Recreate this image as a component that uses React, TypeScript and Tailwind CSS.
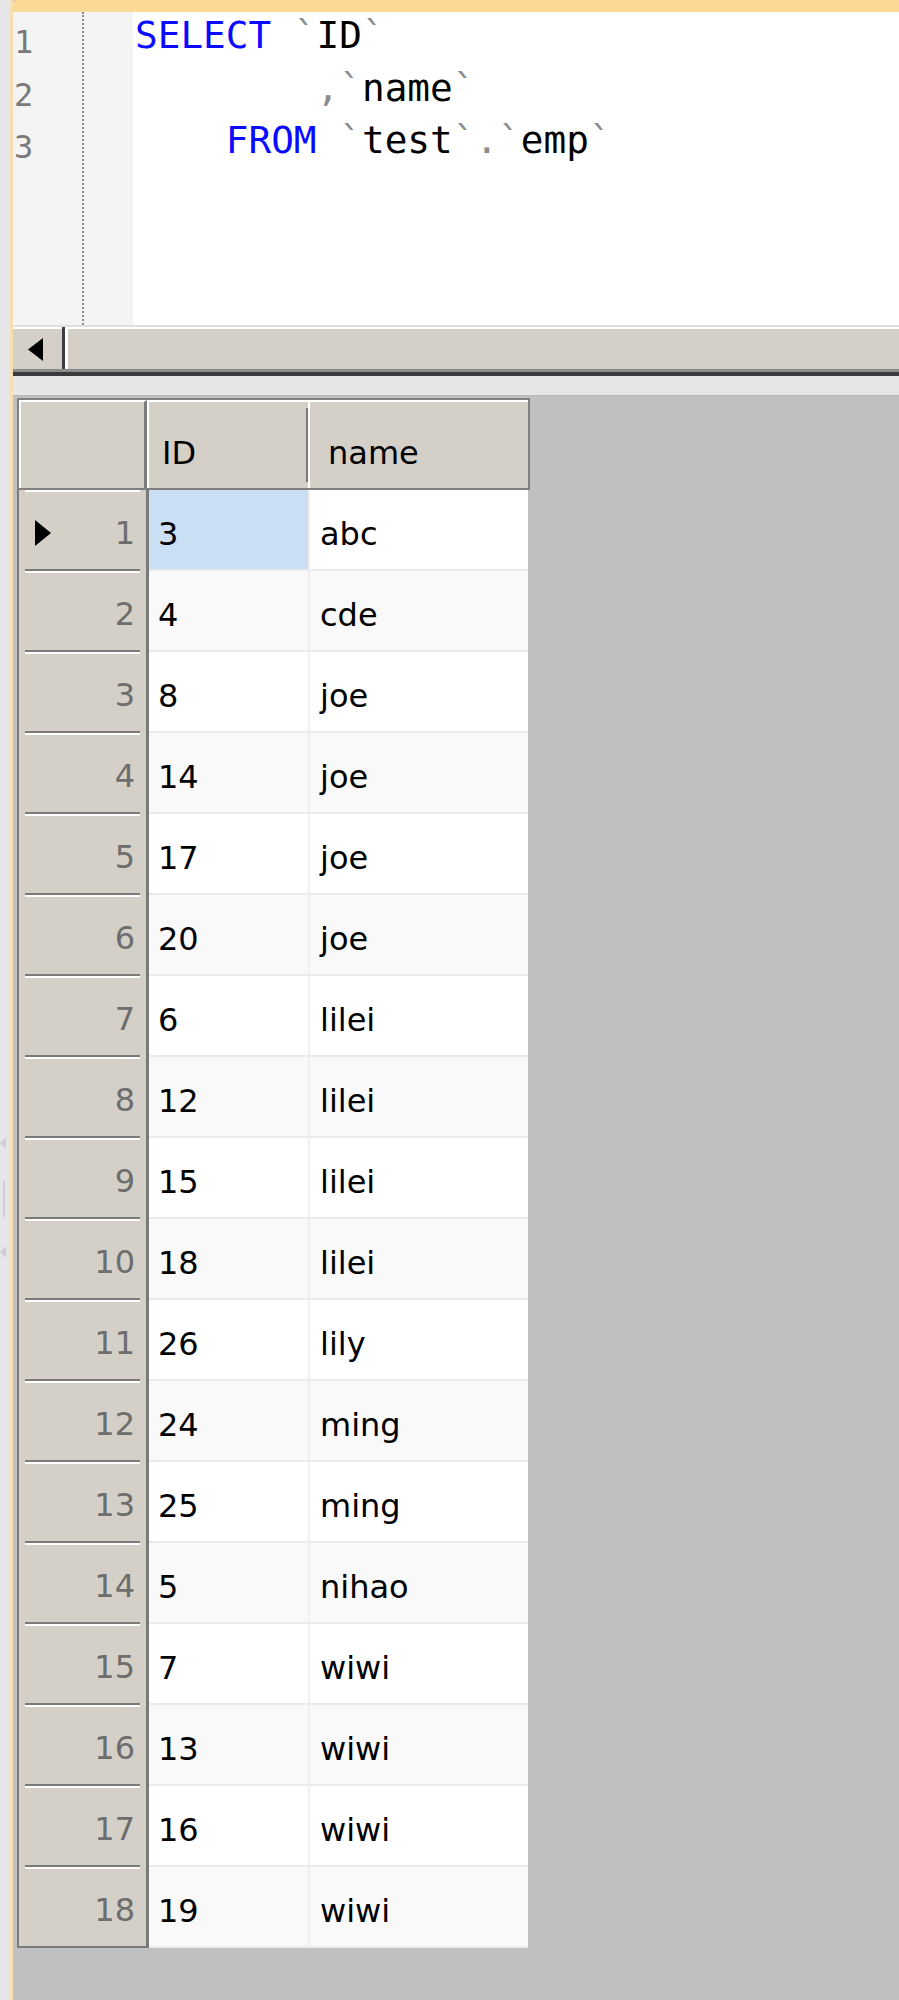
import React from "react";

const rows: [number, string][] = [
  [3, "abc"],
  [4, "cde"],
  [8, "joe"],
  [14, "joe"],
  [17, "joe"],
  [20, "joe"],
  [6, "lilei"],
  [12, "lilei"],
  [15, "lilei"],
  [18, "lilei"],
  [26, "lily"],
  [24, "ming"],
  [25, "ming"],
  [5, "nihao"],
  [7, "wiwi"],
  [13, "wiwi"],
  [16, "wiwi"],
  [19, "wiwi"],
];

const Kw = ({ children }: { children: React.ReactNode }) => (
  <span className="text-[#0a0aff]">{children}</span>
);

const Tick = () => <span className="text-[#8c8c8c]">`</span>;

const Dim = ({ children }: { children: React.ReactNode }) => (
  <span className="text-[#8c8c8c]">{children}</span>
);

const Editor: React.FC = () => (
  <div className="h-[313px] flex bg-white">
    {/* gutter */}
    <div className="w-[120px] flex bg-[#f4f4f4] shrink-0">
      <div className="w-[69px] pt-[4px] pl-[1px] font-['DejaVu_Sans_Mono',monospace] text-[32px] leading-[52.5px] text-[#7a7a7a]">
        <div>1</div>
        <div>2</div>
        <div>3</div>
      </div>
      <div className="w-0 border-l-2 border-dotted border-[#8a8a8a]" />
    </div>
    {/* code */}
    <div className="flex-1 pl-[2px] -mt-[3px] font-['DejaVu_Sans_Mono',monospace] text-[37.7px] leading-[52.5px] text-black whitespace-pre">
      <div>
        <Kw>SELECT</Kw> <Tick />ID<Tick />
      </div>
      <div>
        {"        "}
        <Dim>,</Dim>
        <Tick />name<Tick />
      </div>
      <div>
        {"    "}
        <Kw>FROM</Kw> <Tick />test<Tick />
        <Dim>.</Dim>
        <Tick />emp<Tick />
      </div>
    </div>
  </div>
);

const ScrollBar: React.FC = () => (
  <div className="h-[51px] flex flex-col bg-[#d4d0c8]">
    <div className="h-[2px] bg-[#e2dfd8]" />
    <div className="flex-1 flex">
      <div className="w-[49px] flex items-center justify-center border-t-2 border-white pr-[4px]">
        <svg width="15" height="23" viewBox="0 0 15 23">
          <polygon points="15,0 15,23 0,11.5" fill="#000" />
        </svg>
      </div>
      <div className="w-[3px] bg-[#3c3c3c]" />
      <div className="w-[3px] bg-white" />
      <div className="flex-1 border-t-2 border-white" />
    </div>
    <div className="h-[3px] bg-[#8c8c8c]" />
    <div className="h-[4px] bg-[#3a3a3a]" />
  </div>
);

const Grid: React.FC = () => (
  <div className="w-[513px] flex flex-col font-['DejaVu_Sans',sans-serif] text-[32px] text-black">
    {/* header row */}
    <div className="h-[92px] flex border-2 border-[#7f7f7f] bg-[#d4d0c8]">
      <div className="w-[128px] border-t-2 border-l-2 border-white border-r-[3px] border-r-[#7a7a7a]" />
      <div className="w-[161px] flex border-t-2 border-l-2 border-white">
        <div className="flex-1 flex items-center pl-[13px] pt-[16px]">ID</div>
        <div className="w-[2px] my-[6px] bg-[#7a7a7a]" />
      </div>
      <div className="flex-1 flex items-center border-t-2 border-l-2 border-white pl-[18px] pt-[16px]">
        name
      </div>
    </div>
    {/* data rows */}
    {rows.map(([id, name], i) => {
      const last = i === rows.length - 1;
      const bg = i % 2 === 0 ? "bg-white" : "bg-[#f9f9f9]";
      return (
        <div key={i} className="h-[81px] flex">
          <div
            className={`w-[132px] flex flex-col bg-[#d4d0c8] border-l-2 border-r-[3px] border-[#7a7a7a] ${
              last ? "border-b-2" : ""
            }`}
          >
            <div className="h-[2px] mx-[6px] bg-white" />
            <div className="flex-1 flex items-center pl-[16px] pr-[11px] pt-[5px] text-[#6d6d6d]">
              <div className="w-[17px]">
                {i === 0 && (
                  <svg width="16" height="26" viewBox="0 0 16 26">
                    <polygon points="0,0 16,13 0,26" fill="#000" />
                  </svg>
                )}
              </div>
              <div className="flex-1 text-right">{i + 1}</div>
            </div>
            {!last && <div className="h-[2px] mx-[6px] bg-[#7a7a7a]" />}
          </div>
          <div
            className={`w-[161px] flex items-center pl-[9px] pt-[9px] border-r-2 border-r-[#efefef] border-b-2 border-b-[#ebebeb] ${
              i === 0 ? "bg-[#cadef4]" : bg
            }`}
          >
            {id}
          </div>
          <div className={`w-[218px] flex items-center pl-[10px] pt-[9px] border-b-2 border-b-[#ebebeb] ${bg}`}>
            {name}
          </div>
        </div>
      );
    })}
  </div>
);

export default function App() {
  return (
    <div className="w-[899px] h-[2000px] flex bg-[#c0c0c0] overflow-hidden">
      {/* left splitter strip */}
      <div className="w-[10px] shrink-0 flex flex-col items-start bg-[#e6e6e8] pt-[1137px]">
        <svg width="6" height="12" viewBox="0 0 6 12">
          <polygon points="6,0 6,12 0,6" fill="#cfcfd2" />
        </svg>
        <div className="mt-[32px] ml-[3px] w-[2px] h-[36px] bg-[#cfcfd2]" />
        <svg className="mt-[29px]" width="6" height="12" viewBox="0 0 6 12">
          <polygon points="6,0 6,12 0,6" fill="#cfcfd2" />
        </svg>
      </div>
      <div className="w-[3px] shrink-0 bg-[#f6dfb0]" />

      <div className="flex-1 flex flex-col">
        <div className="h-[12px] bg-[#fcd994] rounded-tl-[4px]" />
        <Editor />
        <ScrollBar />
        <div className="h-[19px] bg-[#e6e6e8]" />
        <div className="flex-1 pl-[4px] pt-[2px] border-t border-[#b9b9b9]">
          <Grid />
        </div>
      </div>
    </div>
  );
}
